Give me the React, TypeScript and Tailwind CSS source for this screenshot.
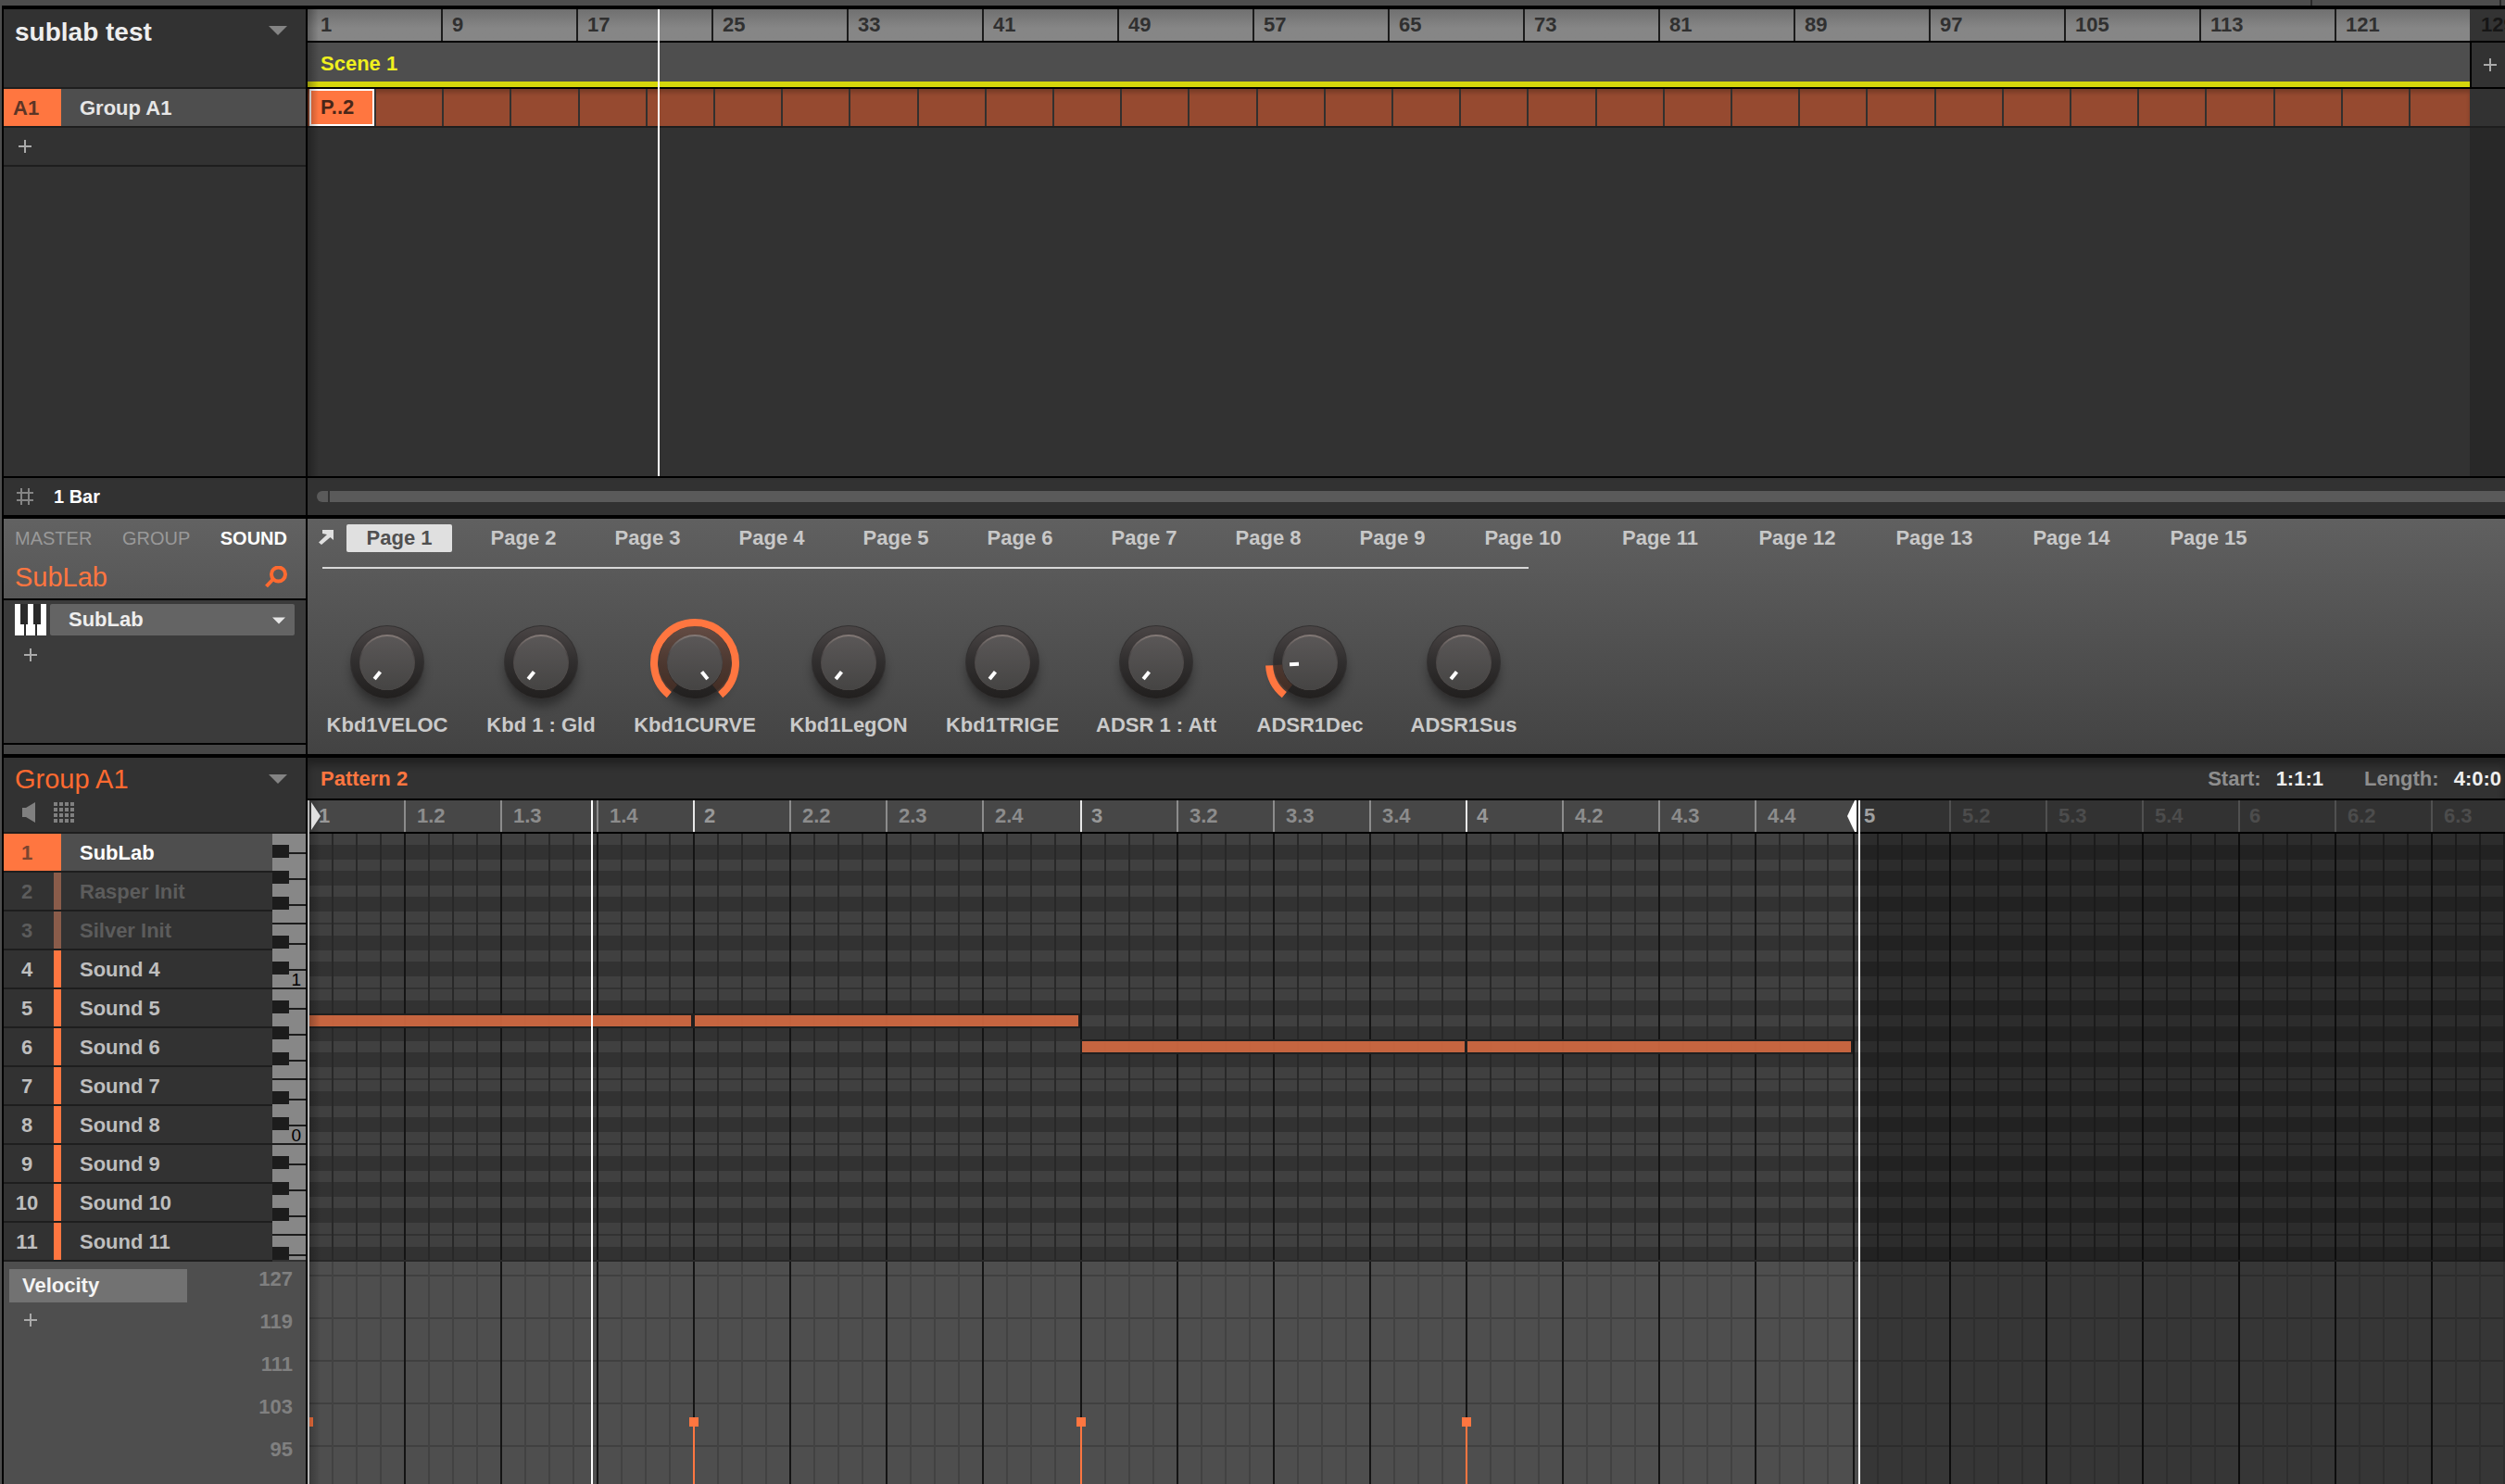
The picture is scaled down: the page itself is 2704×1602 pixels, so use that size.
import clsx from 'clsx';

const SONG_BARS = [9, 17, 25, 33, 41, 49, 57, 65, 73, 81, 89, 97, 105, 113, 121];
const CLIP_COUNT = 30;

const SOUNDS = [
  { name: 'SubLab', state: 'selected' },
  { name: 'Rasper Init', state: 'muted' },
  { name: 'Silver Init', state: 'muted' },
  { name: 'Sound 4', state: 'normal' },
  { name: 'Sound 5', state: 'normal' },
  { name: 'Sound 6', state: 'normal' },
  { name: 'Sound 7', state: 'normal' },
  { name: 'Sound 8', state: 'normal' },
  { name: 'Sound 9', state: 'normal' },
  { name: 'Sound 10', state: 'normal' },
  { name: 'Sound 11', state: 'normal' },
];

const PAGES = Array.from({ length: 15 }, (_, i) => `Page ${i + 1}`);

const KNOBS = [
  { label: 'Kbd1VELOC', value: 0 },
  { label: 'Kbd 1 : Gld', value: 0 },
  { label: 'Kbd1CURVE', value: 100 },
  { label: 'Kbd1LegON', value: 0 },
  { label: 'Kbd1TRIGE', value: 0 },
  { label: 'ADSR 1 : Att', value: 0 },
  { label: 'ADSR1Dec', value: 17 },
  { label: 'ADSR1Sus', value: 0 },
];

// Bars alternate between 416 and 418 pixels
const BARS = [1, 2, 3, 4, 5, 6];

const NOTES = [
  { left: 2, top: 196, width: 412 },
  { left: 418, top: 196, width: 414 },
  { left: 836, top: 224, width: 413 },
  { left: 1252, top: 224, width: 414 },
];

const HITS = [1, 417, 835, 1251];

const VELOCITY_MARKS = [127, 119, 111, 103, 95, 87];

// White keys of one octave from B down to C: is a black key directly below?
const LANES = [true, true, true, false, true, true, false];
const WHITE_KEYS = [
  [0, 20], [22, 26], [50, 26], [78, 18], [98, 20], [120, 26], [148, 18],
];
const BLACK_KEYS = [12, 40, 68, 110, 138];

function Triangle({ className }: { className?: string }) {
  return (
    <svg viewBox="0 0 20 10" className={className}>
      <path d="M0 0H20L10 10Z" fill="currentColor" />
    </svg>
  );
}

function Plus() {
  return (
    <svg viewBox="0 0 14 14" className="w-3.5 h-3.5 text-[#aaaaaa]">
      <path d="M7 0V14M0 7H14" stroke="currentColor" strokeWidth="2" />
    </svg>
  );
}

function arcPoint(radius: number, degrees: number) {
  const a = (degrees * Math.PI) / 180;
  return `${50 + radius * Math.sin(a)} ${50 - radius * Math.cos(a)}`;
}

function Knob({ label, value }: { label: string; value: number }) {
  // Travel runs from 219 to 501 degrees, clockwise from the top
  const end = 219 + value * 2.82;
  const large = end - 219 > 180 ? 1 : 0;
  const arc = (r: number) => `M${arcPoint(r, 219)}A${r} ${r} 0 ${large} 1 ${arcPoint(r, end)}`;

  return (
    <label className="w-[166px] flex flex-col items-center gap-1 text-[22px] leading-[26px] font-bold text-[#cacaca]">
      <input type="range" min={0} max={100} defaultValue={value} className="sr-only" />
      <svg viewBox="0 0 100 100" className="w-[100px] h-[100px] overflow-visible">
        <circle cx="50" cy="58" r="38" fill="#000" opacity="0.4" filter="url(#knob-blur)" />
        <circle cx="50" cy="49" r="40" fill="#333131" />
        <circle cx="50" cy="49" r="39" fill="url(#knob-rim)" />
        {value > 0 && (
          <>
            <path d={arc(35)} fill="none" stroke="#ff7640" strokeWidth="10" opacity="0.14" />
            <path d={arc(44)} fill="none" stroke="#ff7640" strokeWidth="8" />
          </>
        )}
        <circle cx="50" cy="49" r="30" fill="url(#knob-edge)" />
        <circle cx="50" cy="50" r="29" fill="url(#knob-face)" />
        <path d={`M${arcPoint(12, end)}L${arcPoint(22, end)}`} stroke="#fff" strokeWidth="4" />
      </svg>
      {label}
    </label>
  );
}

function KnobDefs() {
  return (
    <svg className="absolute w-0 h-0" aria-hidden="true">
      <defs>
        <linearGradient id="knob-rim" x1="0" y1="0" x2="0" y2="1">
          <stop offset="0" stopColor="#4a4545" />
          <stop offset="0.5" stopColor="#302e2e" />
          <stop offset="1" stopColor="#211f1e" />
        </linearGradient>
        <linearGradient id="knob-edge" x1="0" y1="0" x2="0" y2="1">
          <stop offset="0" stopColor="#857b78" />
          <stop offset="0.35" stopColor="#4a4646" />
          <stop offset="1" stopColor="#5c5452" />
        </linearGradient>
        <linearGradient id="knob-face" x1="0" y1="0" x2="0" y2="1">
          <stop offset="0" stopColor="#5a5757" />
          <stop offset="1" stopColor="#454443" />
        </linearGradient>
        <filter id="knob-blur" x="-50%" y="-50%" width="200%" height="200%">
          <feGaussianBlur stdDeviation="6" />
        </filter>
      </defs>
    </svg>
  );
}

function Keyboard() {
  return (
    <svg viewBox="0 0 36 460" className="w-9 h-[460px] shrink-0">
      <rect width="36" height="460" fill="#1c1c1c" />
      {[0, 168, 336].map(top => (
        <g key={top}>
          {WHITE_KEYS.map(([y, h]) => (
            <rect key={y} x="0" y={top + y} width="36" height={h} fill="#878787" />
          ))}
          {[20, 48, 76, 118, 146].map(y => (
            <rect key={y} x="0" y={top + y} width="18" height="2" fill="#878787" />
          ))}
          {BLACK_KEYS.map(y => (
            <rect key={y} x="0" y={top + y} width="18" height="14" fill="#1c1c1c" />
          ))}
        </g>
      ))}
      <text x="31" y="164" textAnchor="end" fontSize="19" fill="#000">1</text>
      <text x="31" y="332" textAnchor="end" fontSize="19" fill="#000">0</text>
    </svg>
  );
}

function Arranger() {
  return (
    <section className="flex border-t-4 border-black">
      <aside className="w-[330px] shrink-0 flex flex-col border-x-2 border-black bg-[#323232]">
        <button className="h-[86px] pl-3 pr-5 pt-2 flex items-start justify-between border-b-2 border-[#1e1e1e] text-left">
          <span className="text-[28px] leading-[34px] font-bold text-[#eeeeee]">sublab test</span>
          <Triangle className="w-5 h-2.5 mt-2.5 text-[#848484]" />
        </button>
        <button className="h-[42px] flex border-b-2 border-[#1e1e1e] bg-[#4e4e4e] text-left text-[22px] leading-[42px] font-bold">
          <span className="w-[62px] h-full pl-2.5 bg-[#ff7640] text-[#5c3526]">A1</span>
          <span className="pl-5 text-[#e6e6e6]">Group A1</span>
        </button>
        <button aria-label="Add group" className="h-[42px] pl-4 flex items-center border-b-2 border-[#1e1e1e]">
          <Plus />
        </button>
        <div className="h-[334px]" />
        <button className="h-[42px] pl-3.5 flex items-center gap-[22px] border-t-2 border-black">
          <svg viewBox="0 0 18 18" className="w-[18px] h-[18px] text-[#858585]">
            <path d="M5 0V18M13 0V18M0 5H18M0 13H18" stroke="currentColor" strokeWidth="2" />
          </svg>
          <span className="text-[20px] leading-6 font-bold text-white">1 Bar</span>
        </button>
      </aside>

      <div className="flex-1 min-w-0 flex flex-col bg-[#323232]">
        <div className="relative flex-1 flex">
          <div className="flex-1 min-w-0 flex flex-col">
            <div className="h-9 flex border-b-2 border-black bg-linear-to-b from-[#707070] to-[#868686] to-60% text-[22px] leading-[34px] font-bold text-[#303030]">
              <span className="w-[144px] pl-3.5">1</span>
              {SONG_BARS.map(bar => (
                <span key={bar} className="flex-1 pl-2.5 border-l-2 border-[#1c1c1c]">{bar}</span>
              ))}
            </div>
            <button className="h-12 pt-1 pl-3.5 border-b-6 border-[#d6d60c] bg-[#4e4e4e] text-left text-[22px] leading-8 font-bold text-[#f0f01e]">
              Scene 1
            </button>
            <div className="h-[44px] pl-0.5 flex border-y-2 border-t-black border-b-[#1e1e1e] bg-[#964a30] shadow-[inset_0_4px_4px_#00000033]">
              <button className="w-[70px] pl-2.5 border-2 border-white bg-[#ff7640] text-left text-[22px] leading-9 font-bold text-[#4a2618]">
                P..2
              </button>
              <div className="flex-1 flex">
                {Array.from({ length: CLIP_COUNT }, (_, i) => (
                  <span key={i} className="flex-1 border-l-2 border-[#33302e]" />
                ))}
              </div>
              <span className="w-[66px] border-l-2 border-[#33302e]" />
            </div>
            <div className="flex-1" />
          </div>
          <div className="w-[38px] overflow-hidden flex flex-col bg-[#282828]">
            <span className="h-9 pl-3 border-b-2 border-black bg-[#333333] text-[22px] leading-[34px] font-bold text-[#161616]">129</span>
            <button aria-label="Add scene" className="h-12 pl-1 flex items-center justify-center border-l-2 border-black bg-[#323232]">
              <Plus />
            </button>
            <span className="h-[44px] border-y-2 border-t-black border-b-[#1e1e1e] bg-[#323232]" />
          </div>
          <div className="absolute left-0 inset-y-0 w-3 bg-linear-to-r from-black/30 to-transparent" />
          <div className="absolute left-[378px] inset-y-0 w-0.5 bg-white" />
        </div>
        <div className="h-[42px] pl-2.5 flex items-center gap-0.5 border-t-2 border-black">
          <span className="w-3 h-3 rounded-l-full bg-[#5a5a5a]" />
          <span className="flex-1 h-3 bg-[#5a5a5a]" />
        </div>
      </div>
    </section>
  );
}

function ControlArea() {
  return (
    <section className="flex border-t-4 border-black">
      <aside className="w-[330px] shrink-0 flex flex-col border-x-2 border-black bg-[#3b3b3b]">
        <div className="h-[88px] px-3 flex flex-col border-b-2 border-black bg-linear-to-b from-[#626262] to-[#575757]">
          <div className="pt-2 pr-2 flex justify-between text-[20px] leading-[26px] text-[#999999]">
            <button>MASTER</button>
            <button>GROUP</button>
            <button className="font-bold text-white">SOUND</button>
          </div>
          <div className="pt-3 pr-2 flex items-center justify-between text-[#ff7640]">
            <span className="text-[29px] leading-[34px]">SubLab</span>
            <button aria-label="Search plug-in">
              <svg viewBox="0 0 24 24" className="w-6 h-6 text-[#ff6a30]">
                <circle cx="14.5" cy="9" r="7.5" fill="none" stroke="currentColor" strokeWidth="4" />
                <path d="M9 14L1.500 22" stroke="currentColor" strokeWidth="4" />
              </svg>
            </button>
          </div>
        </div>
        <div className="pt-1 pl-3 pr-3 flex gap-1">
          <svg viewBox="0 0 34 34" className="w-[34px] h-[34px] shrink-0">
            <rect width="34" height="34" fill="#fff" />
            <path d="M6 0H14V22H6ZM20 0H28V22H20Z" fill="#2a2a2a" />
            <path d="M11 22V34M23 22V34" stroke="#2a2a2a" strokeWidth="2" />
          </svg>
          <div className="relative flex-1">
            <select aria-label="Plug-in" className="w-full h-[34px] pl-5 appearance-none rounded-xs bg-[#646464] text-[22px] leading-8 font-bold text-[#eeeeee]">
              <option>SubLab</option>
            </select>
            <Triangle className="absolute right-2.5 top-3.5 w-3.5 h-2 pointer-events-none text-[#e6e6e6]" />
          </div>
        </div>
        <button aria-label="Add plug-in" className="mt-3.5 ml-[22px] w-3.5 h-3.5">
          <Plus />
        </button>
        <div className="mt-auto h-3 border-t-2 border-black bg-[#464646]" />
      </aside>

      <div className="flex-1 min-w-0 h-[254px] overflow-hidden bg-linear-to-b from-[#606060] to-[#434343]">
        <nav className="pt-1.5 pl-3 flex text-[22px] leading-[30px] font-bold text-[#c8c8c8]">
          <svg viewBox="0 0 16 16" className="w-4 h-4 mt-1.5 mr-3.5 shrink-0 text-[#e0e0e0]">
            <path d="M4 0H16V11L12.500 8L3 16L0 13.500L9 5L4 4Z" fill="currentColor" />
          </svg>
          <div className="flex gap-5">
            {PAGES.map((page, i) => (
              <button
                key={page}
                className={clsx(
                  'whitespace-nowrap rounded-xs',
                  i < 9 ? 'w-[114px]' : 'w-32',
                  i === 0 && 'bg-[#e0e0e0] text-[#505050]',
                )}
              >
                {page}
              </button>
            ))}
          </div>
        </nav>
        <div className="mt-4 ml-4 w-[1302px] h-0.5 bg-[#d8d8d8]" />
        <div className="mt-[52px] pl-[3px] flex">
          {KNOBS.map(knob => (
            <Knob key={knob.label} {...knob} />
          ))}
        </div>
      </div>
    </section>
  );
}

function PatternRuler() {
  return (
    <div className="h-9 flex overflow-hidden border-b-2 border-black bg-[#474747] text-[22px] leading-[34px] font-bold">
      {BARS.map(bar => (
        <div key={bar} className={clsx('shrink-0 flex', bar % 2 ? 'w-[416px]' : 'w-[418px]')}>
          {[1, 2, 3, 4].map(beat => (
            <span
              key={beat}
              className={clsx(
                'border-l-2',
                beat === 4 ? 'flex-1' : 'w-[104px]',
                beat === 1 ? 'pl-2.5' : 'pl-3',
                bar >= 5 ? 'bg-[#323232]' : '',
                bar < 5 && (beat === 1 ? 'border-[#e8e8e8] text-[#989898]' : 'border-[#8c8c8c] text-[#8c8c8c]'),
                bar >= 5 && (bar === 5 && beat === 1 ? 'border-[#323232] text-[#a0a0a0]' : 'border-[#505050] text-[#4c4c4c]'),
              )}
            >
              {beat === 1 ? bar : `${bar}.${beat}`}
            </span>
          ))}
        </div>
      ))}
    </div>
  );
}

function BeatLines({ sub }: { sub: string }) {
  return (
    <div className="absolute inset-0 flex overflow-hidden">
      {BARS.map(bar => (
        <div key={bar} className={clsx('shrink-0 flex', bar % 2 ? 'w-[416px]' : 'w-[418px]')}>
          {[1, 2, 3, 4].map(beat => (
            <div key={beat} className={clsx('flex border-l-2 border-[#141414]', beat === 4 ? 'flex-1' : 'w-[104px]')}>
              <span className="w-6" />
              <span className={clsx('w-[26px] border-l-2', sub)} />
              <span className={clsx('w-[26px] border-l-2', sub)} />
              <span className={clsx('w-[26px] border-l-2', sub)} />
            </div>
          ))}
        </div>
      ))}
    </div>
  );
}

function PianoRoll() {
  return (
    <div className="relative h-[460px] overflow-hidden bg-[#323232]">
      {[0, 1, 2].map(octave => (
        <div key={octave}>
          {LANES.map((blackBelow, i) => (
            <div
              key={i}
              className={clsx('box-content h-3 bg-[#404040] border-[#323232]', blackBelow ? 'border-b-16' : 'border-b-2')}
            />
          ))}
        </div>
      ))}
      <BeatLines sub="border-[#282828]" />
      {NOTES.map(note => (
        <div
          key={note.left}
          className="absolute h-3 bg-[#ce6740]/95 outline-2 outline-[#202020]"
          style={{ left: note.left, top: note.top, width: note.width }}
        />
      ))}
    </div>
  );
}

function VelocityLane() {
  return (
    <div className="relative flex-1 overflow-hidden border-t-2 border-[#282828] bg-[#4e4e4e]">
      <div className="pt-3.5 flex flex-col gap-[44px]">
        {VELOCITY_MARKS.map(mark => (
          <div key={mark} className="h-0.5 bg-[#404040]" />
        ))}
      </div>
      <BeatLines sub="border-[#424242]" />
      {HITS.map(left => (
        <div key={left} className="absolute top-[168px] bottom-0 w-2.5 -translate-x-1/2 flex flex-col items-center" style={{ left }}>
          <span className="w-2.5 h-2.5 shrink-0 bg-[#ff7640]" />
          <span className="w-0.5 flex-1 bg-[#ff7640]" />
        </div>
      ))}
    </div>
  );
}

function SoundRow({ index, name, state }: { index: number; name: string; state: string }) {
  const selected = state === 'selected';
  const muted = state === 'muted';
  return (
    <button
      className={clsx(
        'h-[42px] flex border-b-2 border-[#1e1e1e] text-left text-[22px] leading-[42px] font-bold',
        selected && 'bg-[#4e4e4e] text-white',
        muted && 'text-[#5c5c5c]',
        state === 'normal' && 'text-[#bebebe]',
      )}
    >
      <span className={clsx('w-[54px] h-full pr-1 text-center', selected && 'bg-[#ff7640] text-[#7a4530]')}>{index}</span>
      <span className={clsx('w-2 h-full', muted ? 'bg-[#8a5c4a]' : 'bg-[#ff7640]')} />
      <span className="pl-5">{name}</span>
    </button>
  );
}

function PatternEditor() {
  return (
    <section className="flex-1 min-h-0 flex border-t-4 border-black">
      <aside className="w-[330px] shrink-0 flex flex-col border-x-2 border-black bg-[#323232]">
        <div className="h-[82px] pl-3 pr-5 pt-[7px] border-b-2 border-[#1e1e1e]">
          <button className="w-full flex items-center justify-between">
            <span className="text-[29px] leading-8 text-[#ff6a30]">Group A1</span>
            <Triangle className="w-5 h-2.5 text-[#848484]" />
          </button>
          <div className="mt-[9px] pl-2 flex gap-5 text-[#808080]">
            <button aria-label="Mute">
              <svg viewBox="0 0 14 22" className="w-3.5 h-[22px]">
                <path d="M0 6H4L14 0V22L4 16H0Z" fill="currentColor" />
              </svg>
            </button>
            <button aria-label="Pad view">
              <svg viewBox="0 0 22 22" className="w-[22px] h-[22px]">
                {[0, 6, 12, 18].map(y =>
                  [0, 6, 12, 18].map(x => <rect key={`${x}-${y}`} x={x} y={y} width="4" height="4" fill="currentColor" />),
                )}
              </svg>
            </button>
          </div>
        </div>
        <div className="flex">
          <div className="flex-1 flex flex-col">
            {SOUNDS.map((sound, i) => (
              <SoundRow key={sound.name} index={i + 1} {...sound} />
            ))}
          </div>
          <Keyboard />
        </div>
        <div className="flex-1 min-h-0 overflow-hidden flex justify-between bg-[#4e4e4e] pl-1.5 pr-3.5 font-bold">
          <div className="w-48 pt-2">
            <button className="w-full h-9 pl-3.5 bg-[#727272] text-left text-[22px] leading-9 text-[#f4f4f4]">Velocity</button>
            <button aria-label="Add lane" className="block mt-3 ml-4">
              <Plus />
            </button>
          </div>
          <div className="pt-[7px] flex flex-col gap-[22px] text-right text-[22px] leading-6 text-[#808080]">
            {VELOCITY_MARKS.map(mark => (
              <span key={mark}>{mark}</span>
            ))}
          </div>
        </div>
      </aside>

      <div className="flex-1 min-w-0 flex flex-col bg-[#323232]">
        <div className="h-[46px] pl-3.5 pr-1 flex overflow-hidden border-b-2 border-black shadow-[inset_0_8px_8px_#00000055] text-[22px] leading-[46px] font-bold">
          <span className="text-[#ff7640]">Pattern 2</span>
          <div className="ml-auto flex text-[#8e8e8e]">
            <span>Start:</span>
            <button className="ml-4 text-[#eeeeee]">1:1:1</button>
            <span className="ml-11">Length:</span>
            <button className="ml-4 text-[#eeeeee]">4:0:0</button>
          </div>
        </div>
        <div className="relative flex-1 min-h-0 overflow-hidden flex flex-col">
          <PatternRuler />
          <PianoRoll />
          <VelocityLane />
          <div className="absolute left-[1676px] right-0 top-9 bottom-0 bg-black/30" />
          <div className="absolute left-0 inset-y-0 w-0.5 bg-[#b4b4b4]" />
          <div className="absolute left-0.5 top-0 bottom-0 w-3 bg-linear-to-r from-black/25 to-transparent" />
          <div className="absolute left-[306px] inset-y-0 w-0.5 bg-white" />
          <div className="absolute left-[1674px] inset-y-0 w-0.5 bg-white" />
          <svg viewBox="0 0 10 30" className="absolute left-1 top-0.5 w-2.5 h-[30px]">
            <path d="M0 0L10 15L0 30Z" fill="#e0e0e0" />
          </svg>
          <svg viewBox="0 0 10 34" className="absolute left-[1662px] top-0 w-2.5 h-[34px]">
            <path d="M10 0V34H8L0 17L8 0Z" fill="#fff" />
          </svg>
        </div>
      </div>
    </section>
  );
}

export default function App() {
  return (
    <main className="h-screen overflow-hidden flex flex-col border-l-2 border-[#4d4d4d] bg-[#323232] font-['Liberation_Sans',sans-serif]">
      <KnobDefs />
      <div className="h-1.5 shrink-0 pr-1 flex justify-end gap-[202px] bg-[#4d4d4d]">
        <span className="w-0.5 bg-[#2a2a2a]" />
        <span className="w-0.5 bg-[#2a2a2a]" />
      </div>
      <Arranger />
      <ControlArea />
      <PatternEditor />
    </main>
  );
}
